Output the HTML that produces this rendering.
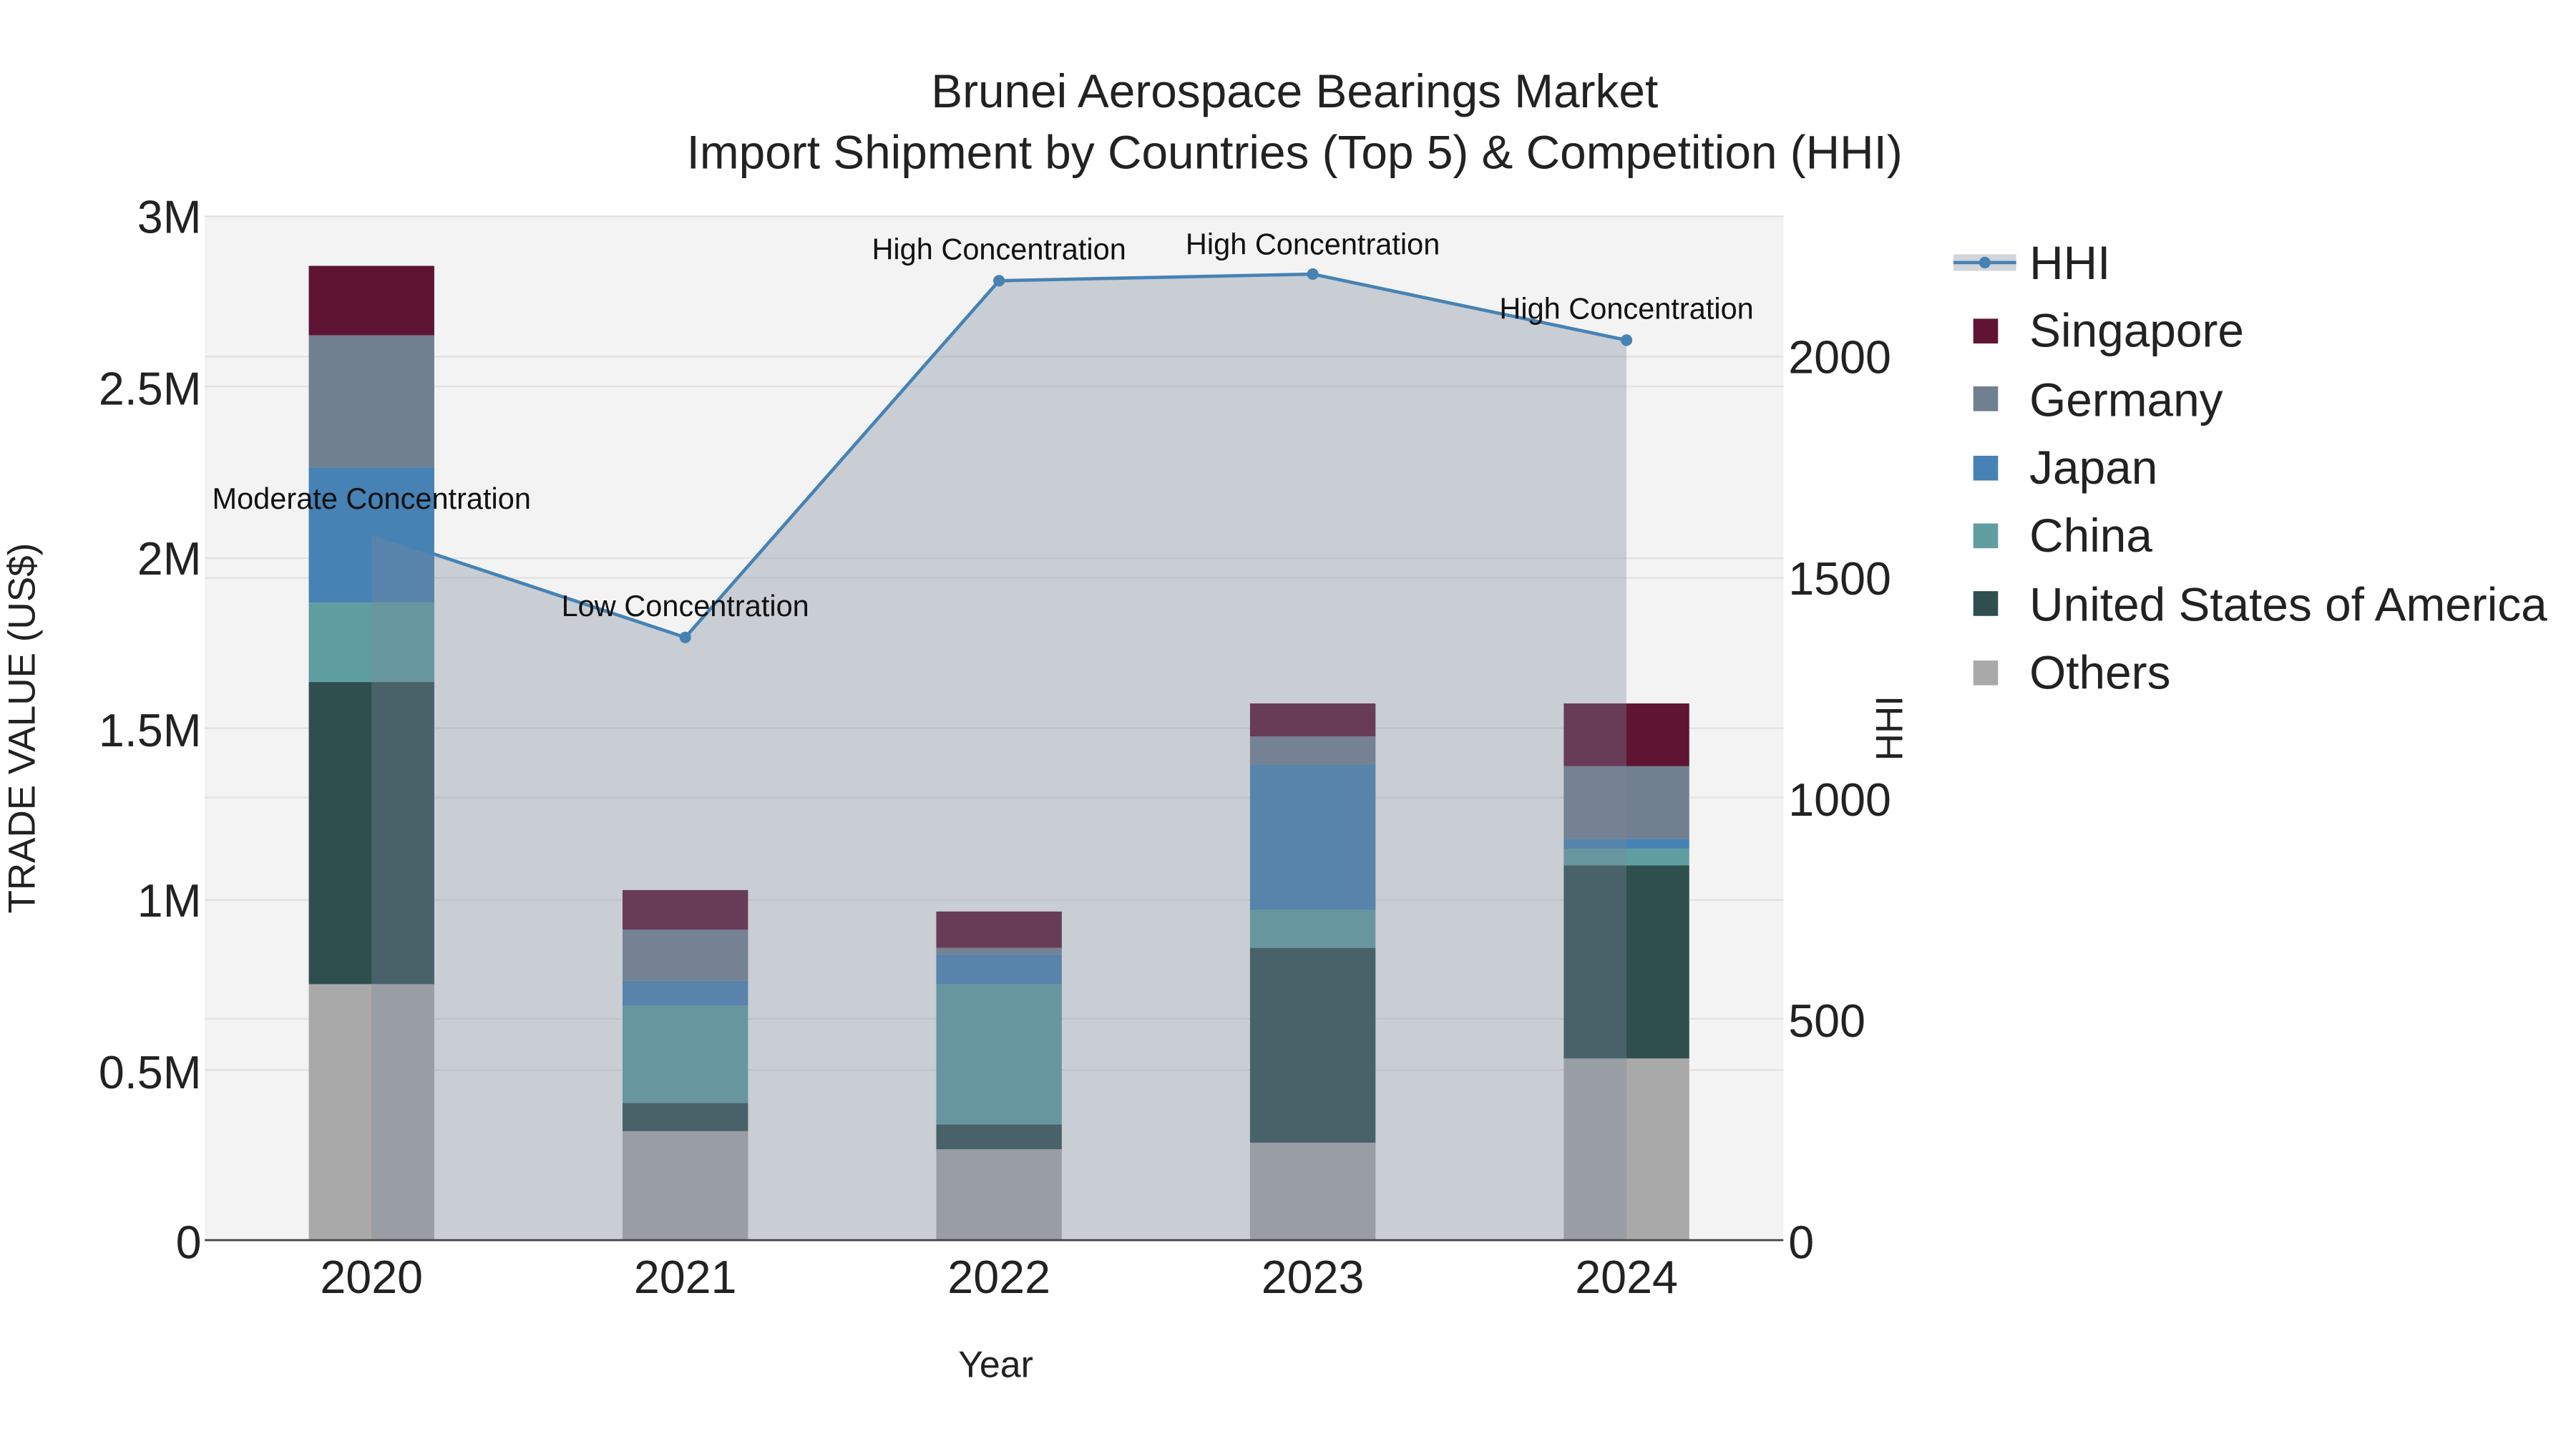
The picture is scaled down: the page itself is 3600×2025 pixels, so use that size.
<!DOCTYPE html>
<html><head><meta charset="utf-8"><style>html,body{margin:0;padding:0;background:#fff}svg{display:block}</style></head><body>
<svg xmlns="http://www.w3.org/2000/svg" width="3600" height="2025" viewBox="0 0 1560 877.5" font-family="Liberation Sans, sans-serif">
<rect width="1560" height="877.5" fill="#fff"/>
<rect x="124" y="131" width="956" height="620" fill="#f3f3f3"/>
<g stroke="#e2e2e2" stroke-width="1">
<line x1="124" x2="1080" y1="131" y2="131"/><line x1="124" x2="1080" y1="234" y2="234"/><line x1="124" x2="1080" y1="338" y2="338"/><line x1="124" x2="1080" y1="441" y2="441"/><line x1="124" x2="1080" y1="545" y2="545"/><line x1="124" x2="1080" y1="648" y2="648"/>
<line x1="124" x2="1080" y1="216" y2="216"/><line x1="124" x2="1080" y1="350" y2="350"/><line x1="124" x2="1080" y1="483" y2="483"/><line x1="124" x2="1080" y1="617" y2="617"/>
</g>
<g>
<rect x="187" y="596" width="76" height="155" fill="#a9a9a9"/><rect x="187" y="413" width="76" height="183" fill="#2f4f4f"/><rect x="187" y="365" width="76" height="48" fill="#5f9ea0"/><rect x="187" y="283" width="76" height="82" fill="#4682b4"/><rect x="187" y="203" width="76" height="80" fill="#708090"/><rect x="187" y="161" width="76" height="42" fill="#5f1434"/>
<rect x="377" y="685" width="76" height="66" fill="#a9a9a9"/><rect x="377" y="668" width="76" height="17" fill="#2f4f4f"/><rect x="377" y="609" width="76" height="59" fill="#5f9ea0"/><rect x="377" y="594" width="76" height="15" fill="#4682b4"/><rect x="377" y="563" width="76" height="31" fill="#708090"/><rect x="377" y="539" width="76" height="24" fill="#5f1434"/>
<rect x="567" y="696" width="76" height="55" fill="#a9a9a9"/><rect x="567" y="681" width="76" height="15" fill="#2f4f4f"/><rect x="567" y="596" width="76" height="85" fill="#5f9ea0"/><rect x="567" y="578" width="76" height="18" fill="#4682b4"/><rect x="567" y="574" width="76" height="4" fill="#708090"/><rect x="567" y="552" width="76" height="22" fill="#5f1434"/>
<rect x="757" y="692" width="76" height="59" fill="#a9a9a9"/><rect x="757" y="574" width="76" height="118" fill="#2f4f4f"/><rect x="757" y="551" width="76" height="23" fill="#5f9ea0"/><rect x="757" y="463" width="76" height="88" fill="#4682b4"/><rect x="757" y="446" width="76" height="17" fill="#708090"/><rect x="757" y="426" width="76" height="20" fill="#5f1434"/>
<rect x="947" y="641" width="76" height="110" fill="#a9a9a9"/><rect x="947" y="524" width="76" height="117" fill="#2f4f4f"/><rect x="947" y="514" width="76" height="10" fill="#5f9ea0"/><rect x="947" y="508" width="76" height="6" fill="#4682b4"/><rect x="947" y="464" width="76" height="44" fill="#708090"/><rect x="947" y="426" width="76" height="38" fill="#5f1434"/>
</g>
<polygon points="225,323 415,386 605,170 795,166 985,206 985,751 225,751" fill="rgba(123,134,154,0.35)"/>
<polyline points="225,323 415,386 605,170 795,166 985,206" fill="none" stroke="#4682b4" stroke-width="2"/>
<g fill="#4682b4"><circle cx="415" cy="386" r="3.5"/><circle cx="605" cy="170" r="3.5"/><circle cx="795" cy="166" r="3.5"/><circle cx="985" cy="206" r="3.5"/></g>
<line x1="124" x2="1080" y1="751" y2="751" stroke="#444" stroke-width="1.2"/>
<g font-size="18" fill="#111" text-anchor="middle">
<text x="225" y="308">Moderate Concentration</text><text x="415" y="373">Low Concentration</text><text x="605" y="157">High Concentration</text><text x="795" y="154">High Concentration</text><text x="985" y="193">High Concentration</text>
</g>
<g font-size="28.5" fill="#222" text-anchor="middle">
<text x="784" y="65">Brunei Aerospace Bearings Market</text>
<text x="784" y="102">Import Shipment by Countries (Top 5) &amp; Competition (HHI)</text>
</g>
<g font-size="28" fill="#222" text-anchor="end">
<text x="122" y="141">3M</text><text x="122" y="245">2.5M</text><text x="122" y="348">2M</text><text x="122" y="452">1.5M</text><text x="122" y="555">1M</text><text x="122" y="659">0.5M</text><text x="122" y="762">0</text>
</g>
<g font-size="28" fill="#222">
<text x="1083" y="226">2000</text><text x="1083" y="360">1500</text><text x="1083" y="494">1000</text><text x="1083" y="628">500</text><text x="1083" y="762">0</text>
</g>
<g font-size="28" fill="#222" text-anchor="middle">
<text x="225" y="783">2020</text><text x="415" y="783">2021</text><text x="605" y="783">2022</text><text x="795" y="783">2023</text><text x="985" y="783">2024</text>
</g>
<text x="603" y="834" font-size="22.5" fill="#222" text-anchor="middle">Year</text>
<text transform="translate(21,441) rotate(-90)" font-size="23" fill="#222" text-anchor="middle">TRADE VALUE (US$)</text>
<text transform="translate(1152,441) rotate(-90)" font-size="23" fill="#222" text-anchor="middle">HHI</text>
<rect x="1183" y="154" width="38" height="10" fill="rgba(123,134,154,0.35)"/>
<line x1="1183" x2="1221" y1="159" y2="159" stroke="#4682b4" stroke-width="2"/><circle cx="1202" cy="159" r="3.5" fill="#4682b4"/>
<rect x="1195" y="193" width="15" height="15" fill="#5f1434"/>
<rect x="1195" y="234" width="15" height="15" fill="#708090"/>
<rect x="1195" y="276" width="15" height="15" fill="#4682b4"/>
<rect x="1195" y="317" width="15" height="15" fill="#5f9ea0"/>
<rect x="1195" y="358" width="15" height="15" fill="#2f4f4f"/>
<rect x="1195" y="400" width="15" height="15" fill="#a9a9a9"/>
<g font-size="28.5" fill="#222">
<text x="1229" y="169">HHI</text><text x="1229" y="210">Singapore</text><text x="1229" y="252">Germany</text><text x="1229" y="293">Japan</text><text x="1229" y="334">China</text><text x="1229" y="376">United States of America</text><text x="1229" y="417">Others</text>
</g>
</svg>
</body></html>
